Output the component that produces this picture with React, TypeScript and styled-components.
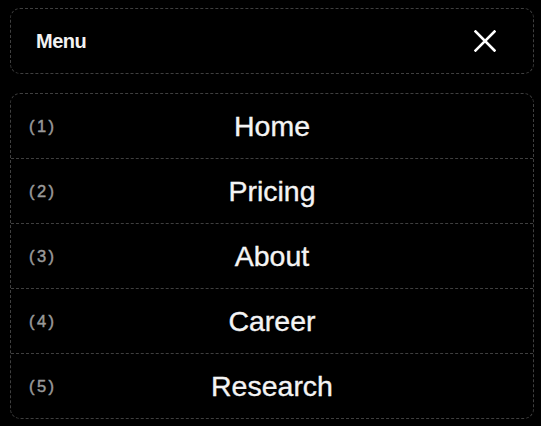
import React from "react";
import styled, { createGlobalStyle } from "styled-components";

const GlobalStyle = createGlobalStyle`
  body {
    margin: 0;
    background: #000;
    font-family: "Liberation Sans", Arial, sans-serif;
  }
`;

const Page = styled.div`
  padding: 8px 7px 8px 10px;
  display: flex;
  flex-direction: column;
  gap: 19px;
`;

const Header = styled.div`
  height: 64px;
  border: 1px dashed #3f3f3f;
  border-radius: 10px;
  display: flex;
  align-items: center;
  justify-content: space-between;
  padding: 0 37px 0 25px;
`;

const Title = styled.span`
  color: #f2f2f2;
  font-size: 20px;
  font-weight: 700;
  letter-spacing: -0.5px;
`;

const CloseButton = styled.button`
  background: none;
  border: none;
  padding: 0;
  width: 22px;
  height: 22px;
  display: flex;
  cursor: pointer;
`;

const List = styled.ul`
  list-style: none;
  margin: 0;
  padding: 0;
  border: 1px dashed #3f3f3f;
  border-radius: 10px;
`;

const Item = styled.li<{ $last?: boolean }>`
  height: 64px;
  display: grid;
  grid-template-columns: 1fr auto 1fr;
  align-items: center;
  padding: 0 18px;
  border-bottom: ${(p) => (p.$last ? "none" : "1px dashed #3f3f3f")};
`;

const Num = styled.span`
  color: #9a9a9a;
  font-size: 16.5px;
  letter-spacing: 2.4px;
  -webkit-text-stroke: 0.45px #9a9a9a;
`;

const Label = styled.a`
  color: #f4f4f4;
  font-size: 28.5px;
  text-decoration: none;
  -webkit-text-stroke: 0.35px #f4f4f4;
`;

const links = ["Home", "Pricing", "About", "Career", "Research"];

export default function App() {
  return (
    <>
      <GlobalStyle />
      <Page>
        <Header>
          <Title>Menu</Title>
          <CloseButton aria-label="Close menu">
            <svg width="22" height="22" viewBox="0 0 22 22">
              <path
                d="M1.5 1.5L20.5 20.5M20.5 1.5L1.5 20.5"
                stroke="#fff"
                strokeWidth="2.6"
                strokeLinecap="square"
              />
            </svg>
          </CloseButton>
        </Header>
        <List>
          {links.map((l, i) => (
            <Item key={l} $last={i === links.length - 1}>
              <Num>({i + 1})</Num>
              <Label href="#">{l}</Label>
              <span />
            </Item>
          ))}
        </List>
      </Page>
    </>
  );
}
